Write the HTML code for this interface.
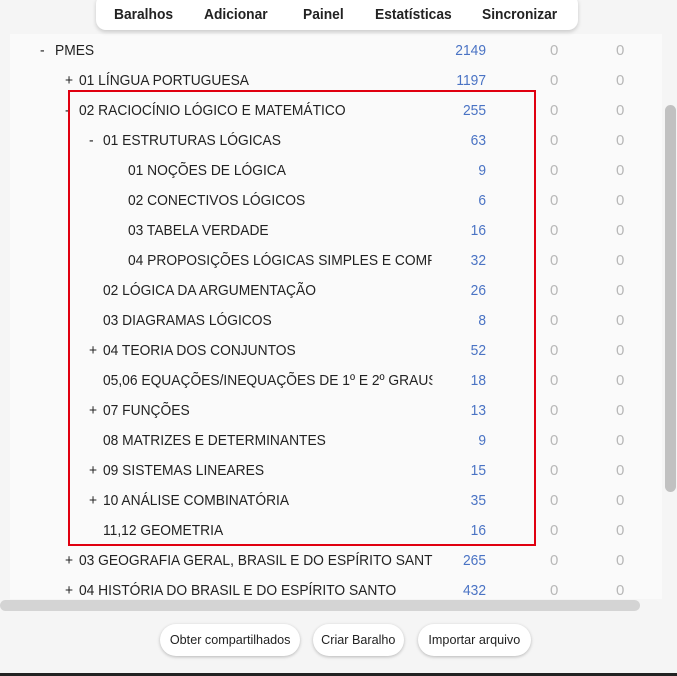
<!DOCTYPE html><html><head><meta charset="utf-8"><style>
body{margin:0;width:677px;height:676px;background:#f5f5f5;font-family:"Segoe UI","Liberation Sans",sans-serif;position:relative;overflow:hidden;color:#222}
.panel{position:absolute;left:10px;top:34px;width:652px;height:565px;background:#fafafa}
.nav{position:absolute;left:96px;top:-6px;width:482px;height:36px;background:#fff;border-radius:10px;box-shadow:0 2px 4px rgba(0,0,0,.18)}
.nav span{position:absolute;top:12px;font-weight:bold;font-size:15px;white-space:nowrap;transform:scaleX(.92);transform-origin:left}
.r{position:absolute;height:30px;line-height:30px;font-size:15px;white-space:nowrap}
.t{position:absolute;transform:scaleX(.92);transform-origin:left;overflow:hidden}
.n{position:absolute;color:#4a73c4;text-align:right;width:60px;left:426px;transform:scaleX(.92);transform-origin:right}
.z{position:absolute;color:#b8b8b8}
.vs{position:absolute;left:665px;top:105px;width:11px;height:387px;background:#c1c1c1;border-radius:6px}
.hs{position:absolute;left:0;top:600px;width:640px;height:11px;background:#d4d4d4;border-radius:6px}
.box{position:absolute;left:68px;top:90px;width:464px;height:452px;border:2px solid #e00010}
.b{position:absolute;top:624px;height:32px;line-height:32px;background:#fff;border-radius:16px;box-shadow:0 1px 3px rgba(0,0,0,.25);font-size:13px;text-align:center}
.b span{display:inline-block;transform:scaleX(.97)}
.bot{position:absolute;left:0;top:673px;width:677px;height:3px;background:#222}
</style></head><body>
<div class="panel"></div>
<div class="nav"><span style="left:18px">Baralhos</span><span style="left:108px">Adicionar</span><span style="left:207px">Painel</span><span style="left:279px">Estatísticas</span><span style="left:386px">Sincronizar</span></div>
<div id="rows"></div>
<div class="box"></div>
<div class="vs"></div><div class="hs"></div>
<div class="b" style="left:160px;width:140px"><span>Obter compartilhados</span></div>
<div class="b" style="left:313px;width:91px"><span>Criar Baralho</span></div>
<div class="b" style="left:418px;width:113px"><span>Importar arquivo</span></div>
<div class="bot"></div>
<script>
var d=[[40,55,"-","PMES",2149],[65,79,"+","01 LÍNGUA PORTUGUESA",1197],[65,79,"-","02 RACIOCÍNIO LÓGICO E MATEMÁTICO",255],[89,103,"-","01 ESTRUTURAS LÓGICAS",63],[0,128,"","01 NOÇÕES DE LÓGICA",9],[0,128,"","02 CONECTIVOS LÓGICOS",6],[0,128,"","03 TABELA VERDADE",16],[0,128,"","04 PROPOSIÇÕES LÓGICAS SIMPLES E COMPOSTAS",32],[0,103,"","02 LÓGICA DA ARGUMENTAÇÃO",26],[0,103,"","03 DIAGRAMAS LÓGICOS",8],[89,103,"+","04 TEORIA DOS CONJUNTOS",52],[0,103,"","05,06 EQUAÇÕES/INEQUAÇÕES DE 1º E 2º GRAUS",18],[89,103,"+","07 FUNÇÕES",13],[0,103,"","08 MATRIZES E DETERMINANTES",9],[89,103,"+","09 SISTEMAS LINEARES",15],[89,103,"+","10 ANÁLISE COMBINATÓRIA",35],[0,103,"","11,12 GEOMETRIA",16],[65,79,"+","03 GEOGRAFIA GERAL, BRASIL E DO ESPÍRITO SANTO",265],[65,79,"+","04 HISTÓRIA DO BRASIL E DO ESPÍRITO SANTO",432]];
var h="";d.forEach(function(r,i){var y=36+i*30;h+='<div class="r" style="top:'+y+'px;left:0;width:660px">'+(r[2]?'<span class="t" style="left:'+r[0]+'px">'+r[2]+'</span>':'')+'<span class="t" style="left:'+r[1]+'px;width:'+((432-r[1])/0.92)+'px">'+r[3]+'</span><span class="n">'+r[4]+'</span><span class="z" style="left:550px">0</span><span class="z" style="left:616px">0</span></div>'});
document.getElementById("rows").innerHTML=h;
</script>
</body></html>
